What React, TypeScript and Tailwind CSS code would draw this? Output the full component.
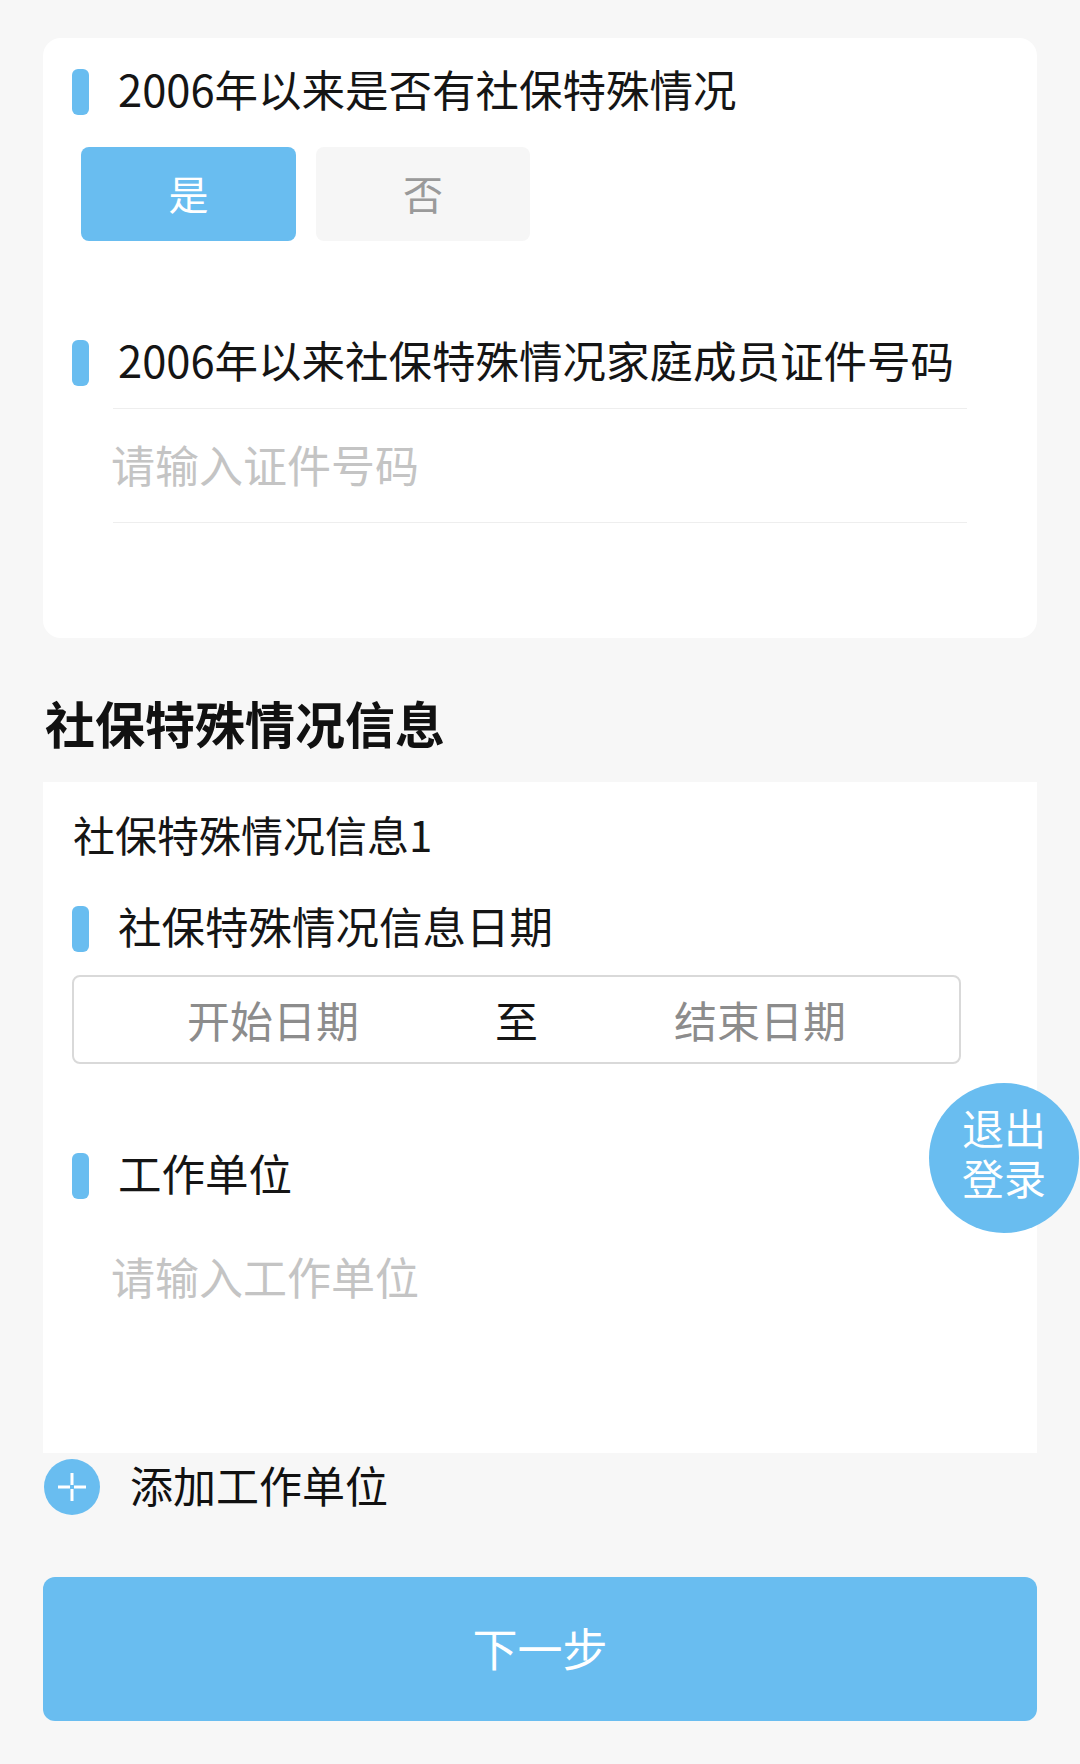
const font = { fontFamily: '"Noto Sans CJK SC", "Noto Sans", sans-serif' };

const Bar = () => <div className="w-[17px] h-[46px] shrink-0 rounded-[6px] bg-[#69bdf0]" />;

const FieldTitle = ({ text }: { text: string }) => (
  <div className="flex items-center h-[46px] pl-[29px]">
    <Bar />
    <span className="ml-[29px] pb-[7px] text-[43.5px] leading-[46px] text-[#151515] whitespace-nowrap">{text}</span>
  </div>
);

const App = () => {
  return (
    <div className="relative min-h-[1764px] w-[1080px] bg-[#f7f7f7] px-[43px] pt-[38px] pb-[43px]" style={font}>
      <div className="h-[600px] rounded-[18px] bg-white pt-[31px]">
        <FieldTitle text="2006年以来是否有社保特殊情况" />
        <div className="mt-[32px] flex gap-[20px] pl-[38px]">
          <button className="flex h-[94px] w-[215px] items-center justify-center rounded-[8px] bg-[#69bdf0] pb-[3px] text-[40px] text-white">是</button>
          <button className="flex h-[94px] w-[214px] items-center justify-center rounded-[8px] bg-[#f6f6f6] pb-[3px] text-[40px] text-[#9a9a9a]">否</button>
        </div>
        <div className="mt-[99px]">
          <FieldTitle text="2006年以来社保特殊情况家庭成员证件号码" />
        </div>
        <div className="mx-[70px] mt-[22px] flex h-[115px] items-center border-y border-[#eeeeee] pb-[4px]">
          <span className="-ml-[2px] text-[44px] text-[#c4c4c4]">请输入证件号码</span>
        </div>
      </div>

      <h2 className="mt-[56px] pl-[2px] text-[50px] font-bold leading-[56px] text-[#111]">社保特殊情况信息</h2>

      <div className="mt-[32px] h-[671px] bg-white pt-[29px]">
        <div className="pl-[30px] text-[42px] leading-[46px] text-[#151515]">社保特殊情况信息1</div>
        <div className="mt-[49px]">
          <FieldTitle text="社保特殊情况信息日期" />
        </div>
        <div className="ml-[29px] mt-[23px] flex h-[89px] w-[889px] items-center justify-center gap-[136px] rounded-[8px] border-2 border-[#d9d9d9] text-[43px]">
          <span className="text-[#8c8c8c]">开始日期</span>
          <span className="text-[#151515]">至</span>
          <span className="text-[#8c8c8c]">结束日期</span>
        </div>
        <div className="mt-[89px]">
          <FieldTitle text="工作单位" />
        </div>
        <div className="mt-[54px] pl-[68px] text-[44px] leading-[46px] text-[#c4c4c4]">请输入工作单位</div>
      </div>

      <div className="mt-[6px] flex h-[56px] items-center pl-px">
        <svg width="56" height="56" viewBox="0 0 56 56">
          <circle cx="28" cy="28" r="28" fill="#69bdf0" />
          <path d="M14 28h12M30 28h12M28 14v12M28 30v12" stroke="#fff" strokeWidth="3" />
        </svg>
        <span className="ml-[30px] pb-[6px] text-[43px] leading-[46px] text-[#111]">添加工作单位</span>
      </div>

      <button className="mt-[62px] flex h-[144px] w-full items-center justify-center rounded-[12px] bg-[#69bdf0] pb-[2px] text-[45px] text-white">
        下一步
      </button>

      <div className="absolute left-[929px] top-[1083px] flex h-[150px] w-[150px] items-center justify-center rounded-full bg-[#69bdf0] pb-[12px] text-center text-[42px] leading-[50px] text-white">
        <span>
          退出
          <br />
          登录
        </span>
      </div>
    </div>
  );
};

export default App;
